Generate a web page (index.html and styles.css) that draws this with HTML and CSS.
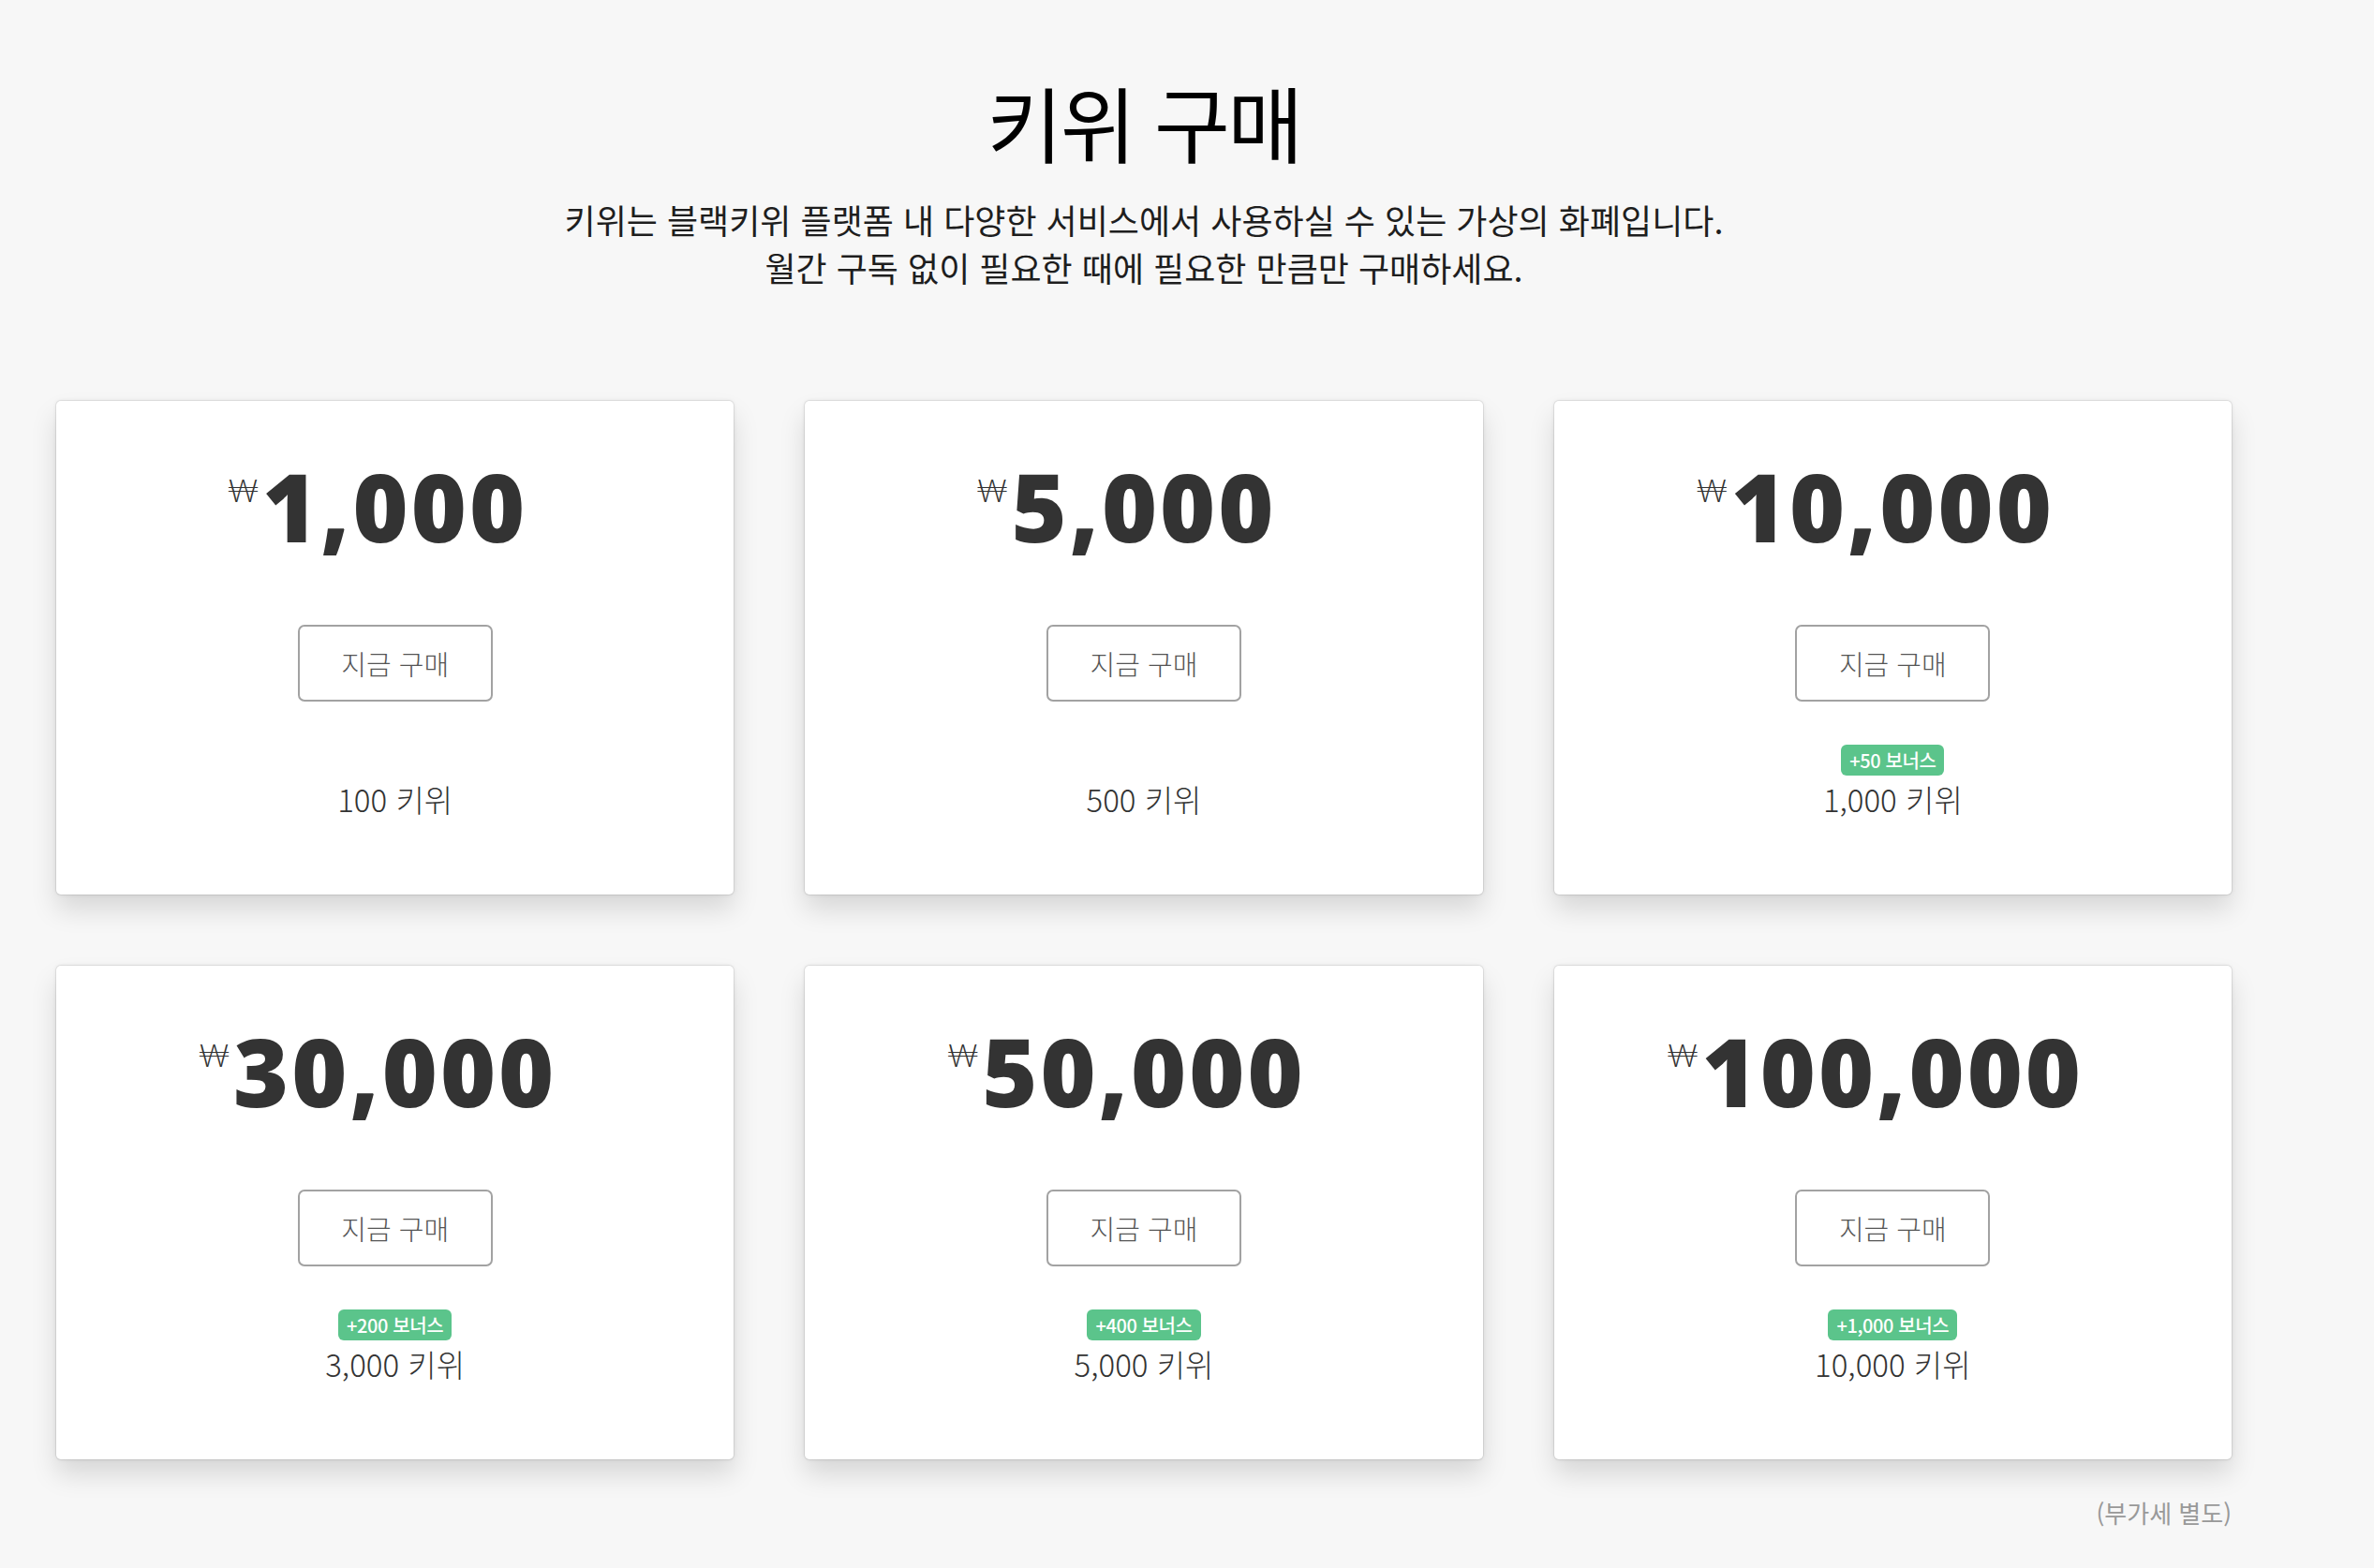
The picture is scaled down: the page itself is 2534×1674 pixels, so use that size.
FILE: index.html
```html
<!DOCTYPE html>
<html lang="ko">
<head>
<meta charset="utf-8">
<title>키위 구매</title>
<link rel="stylesheet" href="styles.css">
</head>
<body>
<main class="page">
  <header class="intro">
    <h1 class="title">키위 구매</h1>
    <p class="lead">키위는 블랙키위 플랫폼 내 다양한 서비스에서 사용하실 수 있는 가상의 화폐입니다.<br>월간 구독 없이 필요한 때에 필요한 만큼만 구매하세요.</p>
  </header>
  <section class="grid">
    <article class="card">
      <div class="price"><span class="num"><span class="won">₩</span>1,000</span></div>
      <button class="buy" type="button">지금 구매</button>
      <div class="bonus-slot"></div>
      <div class="amount">100 키위</div>
    </article>
    <article class="card">
      <div class="price"><span class="num"><span class="won">₩</span>5,000</span></div>
      <button class="buy" type="button">지금 구매</button>
      <div class="bonus-slot"></div>
      <div class="amount">500 키위</div>
    </article>
    <article class="card">
      <div class="price"><span class="num"><span class="won">₩</span>10,000</span></div>
      <button class="buy" type="button">지금 구매</button>
      <div class="bonus-slot"><span class="bonus">+50 보너스</span></div>
      <div class="amount">1,000 키위</div>
    </article>
    <article class="card">
      <div class="price"><span class="num"><span class="won">₩</span>30,000</span></div>
      <button class="buy" type="button">지금 구매</button>
      <div class="bonus-slot"><span class="bonus">+200 보너스</span></div>
      <div class="amount">3,000 키위</div>
    </article>
    <article class="card">
      <div class="price"><span class="num"><span class="won">₩</span>50,000</span></div>
      <button class="buy" type="button">지금 구매</button>
      <div class="bonus-slot"><span class="bonus">+400 보너스</span></div>
      <div class="amount">5,000 키위</div>
    </article>
    <article class="card">
      <div class="price"><span class="num"><span class="won">₩</span>100,000</span></div>
      <button class="buy" type="button">지금 구매</button>
      <div class="bonus-slot"><span class="bonus">+1,000 보너스</span></div>
      <div class="amount">10,000 키위</div>
    </article>
  </section>
  <p class="note">(부가세 별도)</p>
</main>
</body>
</html>
```

FILE: styles.css
```css
* { box-sizing: border-box; }

html, body {
  margin: 0;
  padding: 0;
  background: #f7f7f7;
}

body {
  font-family: "Noto Sans CJK KR", "Noto Sans", sans-serif;
  color: #222;
}

.page {
  width: 2322px;
  margin-left: 60px;
  padding-top: 76px;
  padding-bottom: 40px;
}

.intro {
  text-align: center;
}

.title {
  margin: 0;
  font-size: 88px;
  line-height: 106px;
  font-weight: 400;
  color: #000;
  letter-spacing: -0.03em;
}

.lead {
  margin: 27px 0 0;
  font-size: 36px;
  line-height: 51px;
  font-weight: 400;
  color: #1e1e1e;
  letter-spacing: 0;
}

.grid {
  margin-top: 117px;
  display: grid;
  grid-template-columns: repeat(3, 1fr);
  column-gap: 76px;
  row-gap: 76px;
}

.card {
  background: #fff;
  border-radius: 5px;
  box-shadow: 0 0 0 1px rgba(0, 0, 0, 0.07), 0 0 5px rgba(0, 0, 0, 0.08), 0 16px 28px rgba(0, 0, 0, 0.13);
  padding: 62px 0 79px;
  display: flex;
  flex-direction: column;
  align-items: center;
}

.price {
  height: 100px;
  font-family: "Open Sans", "Noto Sans", sans-serif;
  font-weight: 800;
  font-size: 101px;
  line-height: 100px;
  color: #333;
  letter-spacing: 0.03em;
}

.num {
  position: relative;
  display: inline-block;
}

.won {
  position: absolute;
  right: 100%;
  top: 16px;
  margin-right: 3px;
  font-family: Lato, "Noto Sans", "DejaVu Sans", sans-serif;
  font-weight: 300;
  font-size: 34px;
  line-height: 34px;
  color: #333;
  letter-spacing: 0;
}

.buy {
  margin-top: 77px;
  width: 208px;
  height: 82px;
  border: 2px solid #a2a2a2;
  border-radius: 7px;
  background: #fff;
  font-family: "Noto Sans CJK KR", sans-serif;
  font-size: 29px;
  font-weight: 300;
  color: #555;
  letter-spacing: 0;
  padding: 0;
}

.bonus-slot {
  margin-top: 46px;
  height: 33px;
  display: flex;
  justify-content: center;
}

.bonus {
  display: inline-block;
  height: 33px;
  line-height: 33px;
  padding: 0 9px;
  border-radius: 6px;
  background: #5bc48b;
  color: #fff;
  font-size: 20px;
  font-weight: 500;
  letter-spacing: -0.02em;
}

.amount {
  margin-top: 3px;
  font-size: 33px;
  line-height: 45px;
  font-weight: 300;
  color: #333;
  letter-spacing: 0;
}

.note {
  margin: 39px 0 0;
  text-align: right;
  font-size: 26px;
  line-height: 36px;
  color: #999;
  letter-spacing: 0;
}
```
